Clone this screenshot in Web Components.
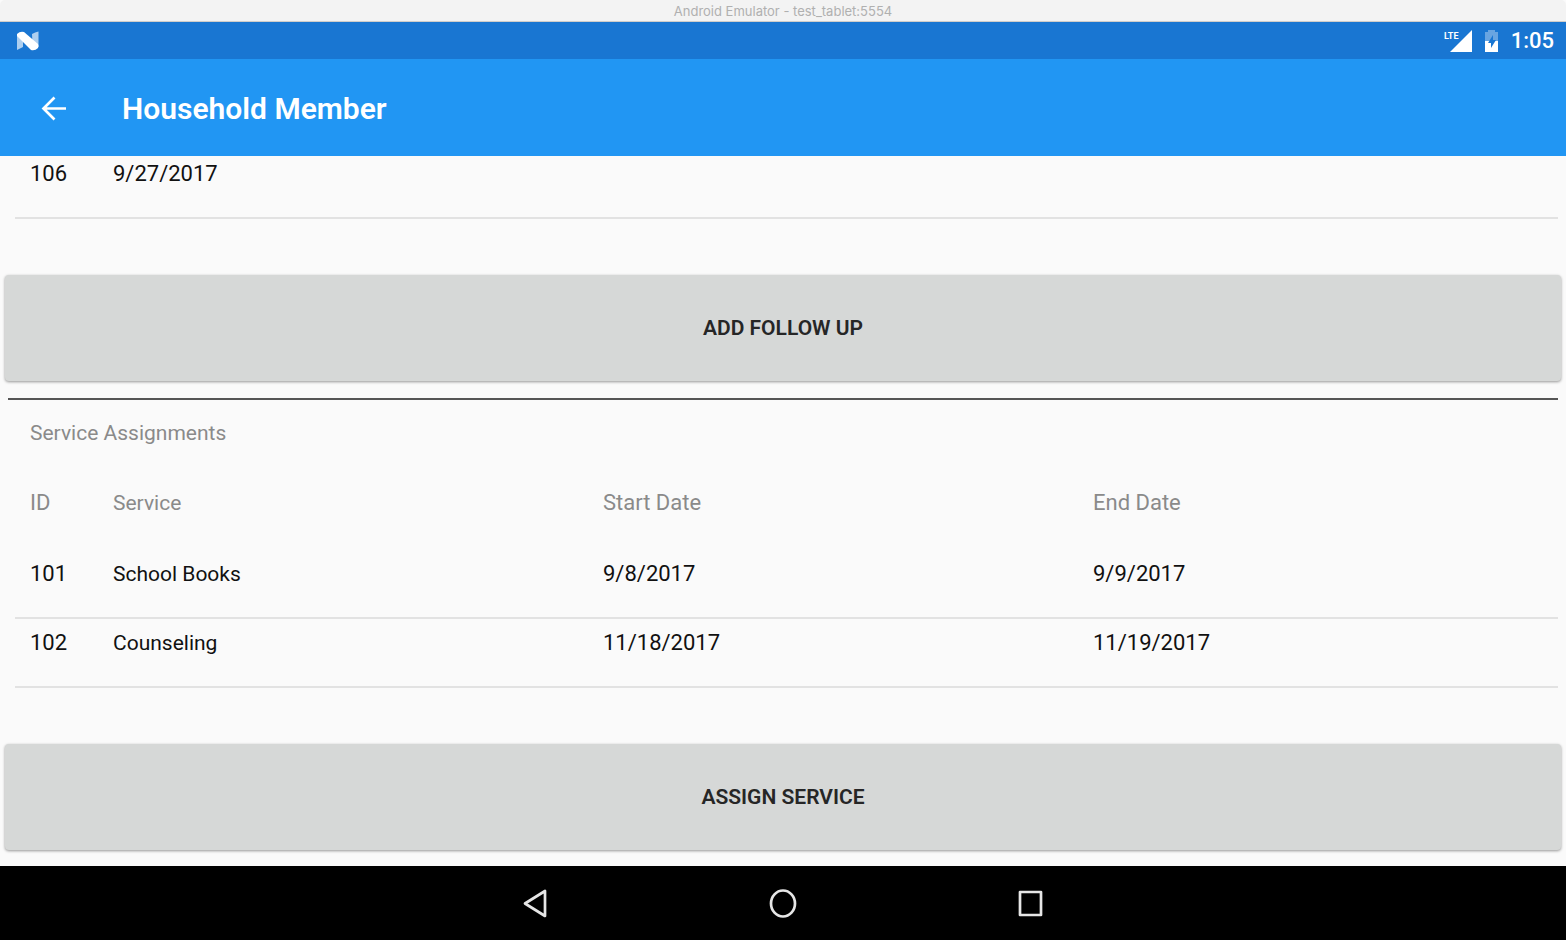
<!DOCTYPE html>
<html lang="en">
<head>
<meta charset="utf-8">
<meta name="viewport" content="width=device-width, initial-scale=1">
<title>Household Member</title>
<style>
  html, body { margin: 0; height: 100%; }
  body { background: #fafafa; color: #111; font: 22px/26px Roboto, sans-serif; }
</style>
</head>
<body>
<device-window>
  <window-title slot="title">Android Emulator - test_tablet:5554</window-title>
  <status-bar slot="status">1:05</status-bar>
  <app-bar slot="bar">Household Member</app-bar>
  <follow-up-table></follow-up-table>
  <action-button>ADD FOLLOW UP</action-button>
  <section-heading>Service Assignments</section-heading>
  <service-table></service-table>
  <action-button>ASSIGN SERVICE</action-button>
  <nav-bar slot="nav"></nav-bar>
</device-window>

<script>
class BaseElement extends HTMLElement {
  constructor() {
    super();
    this.attachShadow({ mode: 'open' }).innerHTML = this.template();
  }
}

customElements.define('device-window', class extends BaseElement {
  template() {
    return `<style>
      :host { display: flex; flex-direction: column; height: 100vh; }
      /* The list rests at the end of its scroll, so it is anchored to the bottom edge. */
      main { flex: 1; min-height: 0; overflow: hidden; display: flex; flex-direction: column;
             justify-content: flex-end; background: #fafafa; }
    </style>
    <slot name="title"></slot><slot name="status"></slot><slot name="bar"></slot>
    <main><slot></slot></main>
    <slot name="nav"></slot>`;
  }
});

customElements.define('window-title', class extends BaseElement {
  template() {
    return `<style>
      :host { display: block; flex: none; background: #f3f3f3; color: #b0b0b0; text-align: center;
              font: 13px/23px Inter, sans-serif; border-bottom: 1px solid #d0cdca;
              border-radius: 5px 5px 0 0; box-sizing: border-box; height: 22px; }
    </style><slot></slot>`;
  }
});

customElements.define('status-bar', class extends BaseElement {
  template() {
    return `<style>
      :host { display: flex; flex: none; align-items: center; height: 37px; padding: 0 12px 0 16px;
              box-sizing: border-box; background: #1976d2; color: #fff; font-weight: 500; }
      .spacer { flex: 1; }
      .cell, .battery { margin-right: 12px; }
      svg { display: block; }
    </style>
    <svg width="24" height="20" viewBox="0 0 24 20" aria-label="Android N">
      <path d="M1 3v16l6-3V6z M16 3q3-2 6.500-2.500V16l-6-3z" fill="#fff" opacity=".65"/>
      <path d="M1 3q3-3 7-2l14 12q1 2 0 4-3 3-7 2L1 5z" fill="#fff"/>
    </svg>
    <span class="spacer"></span>
    <svg class="cell" width="28" height="24" viewBox="0 0 28 24">
      <path d="M28 1v22H6z" fill="#fff"/>
      <text x="0" y="10" font-family="Roboto, sans-serif" font-size="9" font-weight="700" fill="#fff">LTE</text>
    </svg>
    <svg class="battery" width="15" height="24" viewBox="0 0 15 24">
      <path d="M1 3h3V1h7v2h3v9H1z" fill="#fff" opacity=".35"/>
      <path d="M1 12h13v11H1z" fill="#fff"/>
      <path d="M9 6l-5 8h3v5l5-8H9z" fill="#1976d2"/>
    </svg>
    <span><slot></slot></span>`;
  }
});

customElements.define('app-bar', class extends BaseElement {
  template() {
    return `<style>
      :host { display: flex; flex: none; align-items: center; gap: 47px; height: 97px; padding: 2px 33px 0;
              box-sizing: border-box; background: #2196f3; color: #fff; }
      button { display: block; border: 0; padding: 8px; background: none; color: inherit; }
      svg { display: block; }
      h1 { margin: 0; font-size: 30px; line-height: 36px; font-weight: 600; }
    </style>
    <button aria-label="Back"><svg width="26" height="26" viewBox="0 0 26 26" fill="none" stroke="currentColor" stroke-width="2.700">
      <path d="M25 12.500H3M13.500 1.500l-11 11 11 11"/></svg></button>
    <h1><slot></slot></h1>`;
  }
});

class RecordTable extends BaseElement {
  template() {
    const cells = (tag, list) => list.map(v => `<${tag}>${v}</${tag}>`).join('');
    const head = this.columns ? `<thead><tr>${cells('th', this.columns)}</tr></thead>` : '';
    return `<style>
      :host { display: block; flex: none; padding: 0 8px 0 15px; }
      table, thead, tbody { display: block; }
      tr { display: grid; grid-template-columns: 58px repeat(3, 1fr); column-gap: 25px; padding-left: 15px; }
      th, td { padding: 0; text-align: left; font-weight: 400; }
      th { color: #8a8a8a; padding: 44px 0 34px; }
      td { padding: 11px 0 30px; }
      tbody tr { border-bottom: 2px solid #e2e2e2; }
      :host(service-table) :nth-child(2):is(th, td) { font-size: 21px; }
    </style>
    <table>${head}<tbody>${this.rows.map(r => `<tr>${cells('td', r)}</tr>`).join('')}</tbody></table>`;
  }
}

customElements.define('follow-up-table', class extends RecordTable {
  get rows() { return [['106', '9/27/2017']]; }
});

customElements.define('service-table', class extends RecordTable {
  get columns() { return ['ID', 'Service', 'Start Date', 'End Date']; }
  get rows() {
    return [
      ['101', 'School Books', '9/8/2017', '9/9/2017'],
      ['102', 'Counseling', '11/18/2017', '11/19/2017']
    ];
  }
});

customElements.define('section-heading', class extends BaseElement {
  template() {
    return `<style>
      :host { display: block; flex: none; margin: 1px 8px 0; border-top: 2px solid #555; color: #8a8a8a; }
      h2 { margin: 0; padding: 20px 22px 0; font-size: 21px; line-height: 26px; font-weight: 400; }
    </style><h2><slot></slot></h2>`;
  }
});

customElements.define('action-button', class extends BaseElement {
  template() {
    return `<style>
      :host { display: block; flex: none; padding: 56px 5px 16px; }
      button { display: block; width: 100%; height: 106px; border: 0; border-radius: 4px; padding: 0;
               background: #d6d8d7; color: #262626; font: 600 21px/26px Roboto, sans-serif;
               box-shadow: 0 1px 3px rgba(0, 0, 0, .4); }
    </style><button><slot></slot></button>`;
  }
});

customElements.define('nav-bar', class extends BaseElement {
  template() {
    return `<style>
      :host { display: flex; flex: none; justify-content: center; align-items: center; gap: 208px;
              height: 74px; background: #000; }
      button { display: block; border: 0; padding: 4px; background: none; color: #e6e6e6; }
      svg { display: block; fill: none; stroke: currentColor; stroke-width: 2.700; stroke-linejoin: round; }
    </style>
    <button aria-label="Back"><svg width="32" height="32" viewBox="0 0 32 32"><path d="M26 4v25L6 16.500z"/></svg></button>
    <button aria-label="Home"><svg width="32" height="32" viewBox="0 0 32 32"><ellipse cx="16" cy="16.500" rx="12" ry="13"/></svg></button>
    <button aria-label="Overview"><svg width="32" height="32" viewBox="0 0 32 32"><path d="M5 5h21v23H5z"/></svg></button>`;
  }
});
</script>
</body>
</html>
